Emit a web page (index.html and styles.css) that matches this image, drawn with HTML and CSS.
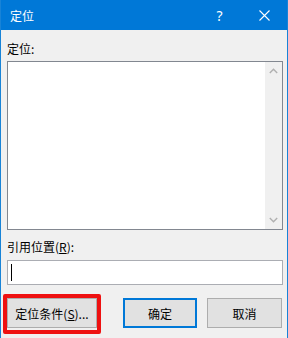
FILE: index.html
```html
<!DOCTYPE html>
<html lang="zh-CN">
<head>
    <meta charset="UTF-8">
    <title>定位</title>
    <link rel="stylesheet" href="styles.css">
</head>
<body>
    <div class="dialog">
        <div class="title-bar">
            <span class="title">定位</span>
            <span class="title-btn">?</span>
            <span class="title-btn">
                <svg width="11" height="11" viewBox="0 0 11 11"><path d="M0.5 0.5L10.5 10.5M10.5 0.5L0.5 10.5" stroke="#fff" stroke-width="1.1" fill="none"/></svg>
            </span>
        </div>

        <div class="content">
            <label class="field-label">定位:</label>
            <div class="listbox">
                <div class="list-items"></div>
                <div class="scrollbar">
                    <svg width="9" height="6" viewBox="0 0 9 6"><path d="M0.8 5L4.5 1.3L8.2 5" stroke="#b0b0b0" stroke-width="1.4" fill="none"/></svg>
                    <svg width="9" height="6" viewBox="0 0 9 6"><path d="M0.8 1L4.5 4.7L8.2 1" stroke="#b0b0b0" stroke-width="1.4" fill="none"/></svg>
                </div>
            </div>

            <label class="field-label ref-label">引用位置(<u>R</u>):</label>
            <div class="ref-input"><span class="caret"></span></div>

            <div class="buttons">
                <button class="btn special">定位条件(<u>S</u>)...</button>
                <button class="btn default">确定</button>
                <button class="btn">取消</button>
            </div>
        </div>
    </div>
</body>
</html>
```

FILE: styles.css
```css
body {
    margin: 0;
    font-family: "Noto Sans CJK SC", "Noto Sans", sans-serif;
    font-size: 12px;
}

.dialog {
    width: 288px;
    height: 338px;
    box-sizing: border-box;
    background-color: #f0f0f0;
    border-left: 1px solid #1883d7;
    border-right: 1px solid #1883d7;
    overflow: hidden;
}

.title-bar {
    display: flex;
    align-items: center;
    height: 30px;
    background-color: #0078d7;
    color: #fff;
}

.title {
    flex: 1;
    padding-left: 9px;
    font-size: 12px;
}

.title-btn {
    width: 45px;
    height: 30px;
    display: flex;
    align-items: center;
    justify-content: center;
    font-family: "Noto Sans", sans-serif;
    font-size: 14px;
}

.content {
    padding: 11px 4px 0 6px;
}

.field-label {
    display: block;
    height: 16px;
    line-height: 16px;
    color: #000;
}

.listbox {
    display: flex;
    margin-top: 4px;
    height: 169px;
    box-sizing: border-box;
    border: 1px solid #828790;
    background-color: #fff;
}

.list-items {
    flex: 1;
}

.scrollbar {
    width: 17px;
    background-color: #f0f0f0;
    display: flex;
    flex-direction: column;
    justify-content: space-between;
    align-items: center;
    padding: 6px 0;
}

.ref-label {
    margin-top: 9px;
}

.ref-input {
    margin-top: 5px;
    height: 25px;
    box-sizing: border-box;
    border: 1px solid #abadb3;
    background-color: #fff;
    padding: 3px 0 0 3px;
}

.caret {
    display: block;
    width: 1px;
    height: 17px;
    background-color: #000;
}

.buttons {
    display: flex;
    margin-top: 13px;
}

.btn {
    height: 30px;
    width: 75px;
    box-sizing: border-box;
    border: 1px solid #adadad;
    background-color: #e1e1e1;
    font-family: inherit;
    font-size: 12px;
    color: #000;
    padding: 0;
}

.btn.special {
    position: relative;
    width: 90px;
}

/* red highlight drawn round the first button */
.btn.special::after {
    content: "";
    position: absolute;
    left: -5px;
    top: -5px;
    right: -5px;
    bottom: -7px;
    border: 4px solid #ee1111;
    border-radius: 2px;
}

.btn.default {
    margin-left: 26px;
    width: 74px;
    border: 2px solid #0078d7;
}

.btn + .btn:not(.default) {
    margin-left: 10px;
}
```
